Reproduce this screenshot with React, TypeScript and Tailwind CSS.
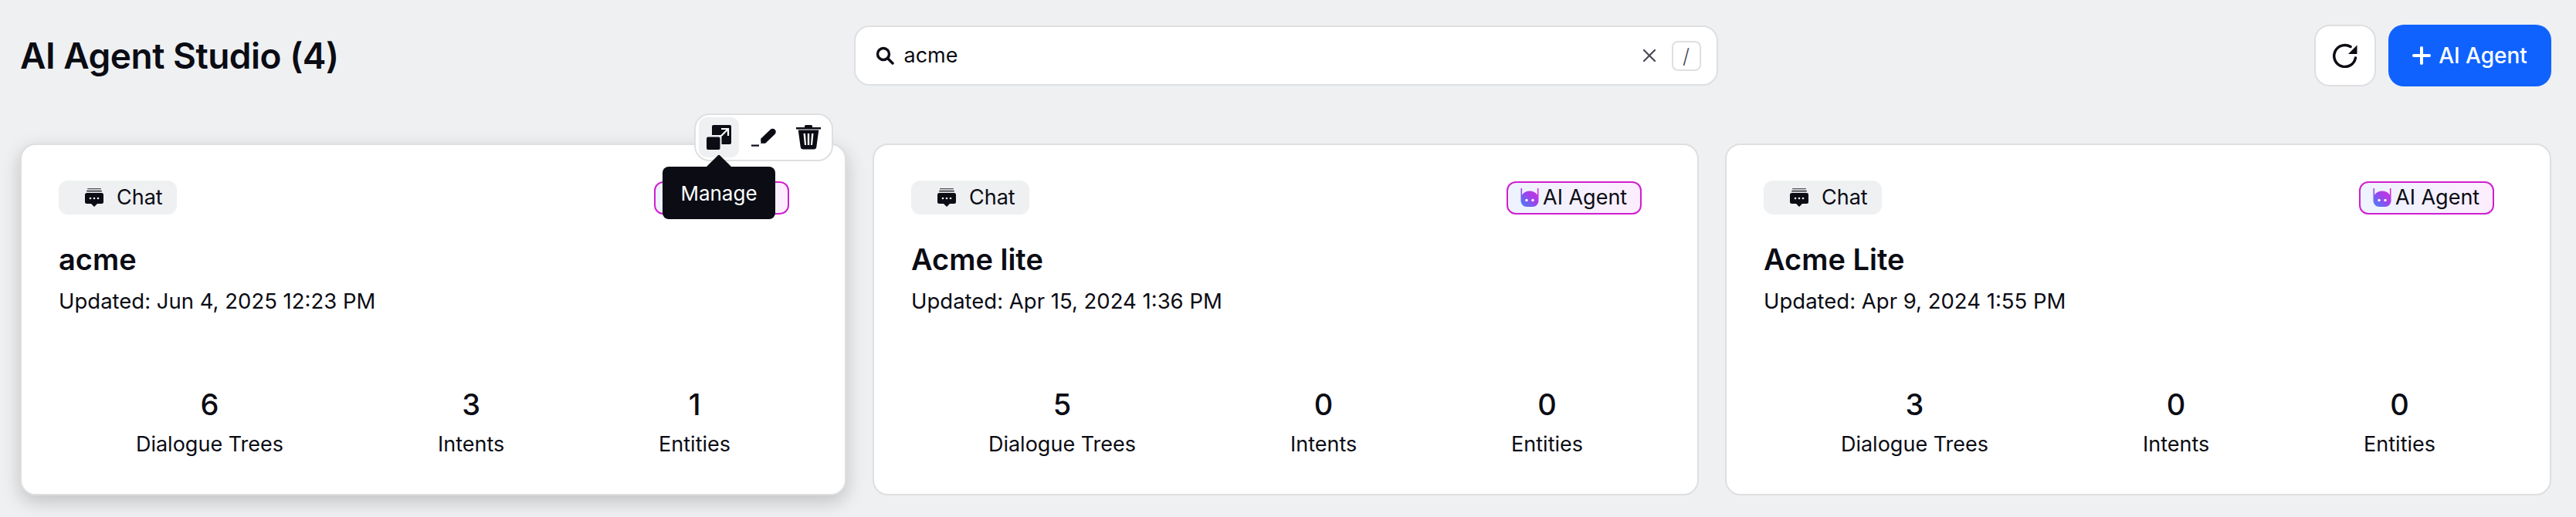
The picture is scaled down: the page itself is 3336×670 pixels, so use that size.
import { X } from 'lucide-react';

const agents = [
  { name: 'acme', updated: 'Jun 4, 2025 12:23 PM', trees: 6, intents: 3, entities: 1, active: true },
  { name: 'Acme lite', updated: 'Apr 15, 2024 1:36 PM', trees: 5, intents: 0, entities: 0, active: false },
  { name: 'Acme Lite', updated: 'Apr 9, 2024 1:55 PM', trees: 3, intents: 0, entities: 0, active: false },
];

const ChatIcon = () => (
  <svg viewBox="0 0 24 24" className="w-[24px] h-[24px]" fill="#0b0c14">
    <rect x="3" y="0" width="18" height="1.2" rx="0.6" opacity="0.7" />
    <rect x="2" y="2.8" width="20" height="1.6" rx="0.8" opacity="0.8" />
    <path d="M2.5 6h19A2.5 2.5 0 0 1 24 8.5v9a2.5 2.5 0 0 1-2.5 2.5H16l-4 4-4-4H2.500A2.500 2.500 0 0 1 0 17.500v-9A2.500 2.500 0 0 1 2.500 6z" />
    <circle cx="7" cy="13" r="1.3" fill="#eef0f2" />
    <circle cx="12" cy="13" r="1.3" fill="#eef0f2" />
    <circle cx="17" cy="13" r="1.3" fill="#eef0f2" />
  </svg>
);

const RobotIcon = ({ id }: { id: string }) => (
  <svg viewBox="0 0 24 24" className="w-[24px] h-[24px]">
    <defs>
      <linearGradient id={id} x1="0" y1="1" x2="1" y2="0">
        <stop offset="0" stopColor="#3f86f8" />
        <stop offset="0.5" stopColor="#9a45ec" />
        <stop offset="1" stopColor="#e626dc" />
      </linearGradient>
    </defs>
    <path
      fill={`url(#${id})`}
      d="M0.500 0h1.600v8.500C4.500 5.200 8 3.500 12 3.500s7.500 1.700 9.900 5V0h1.600v16c0 4.500-3.500 8-8 8h-7c-4.500 0-8-3.500-8-8z"
    />
    <circle cx="8" cy="15.500" r="1.700" fill="#fff" />
    <circle cx="16" cy="15.500" r="1.700" fill="#fff" />
  </svg>
);

const ManageIcon = () => (
  <svg viewBox="0 0 32 32" className="w-[32px] h-[32px]" fill="#0b0c14">
    <path d="M7 2a2 2 0 0 1 2-2h21a2 2 0 0 1 2 2v21a2 2 0 0 1-2 2H19.500V13H7z" />
    <path d="M19 14l9-9M19 5h9v9" fill="none" stroke="#fff" strokeWidth="2.200" />
    <rect x="0" y="15.500" width="17.500" height="16.500" rx="2" />
  </svg>
);

const PenIcon = () => (
  <svg viewBox="0 0 32 32" className="w-[32px] h-[32px]" fill="#0b0c14">
    <rect x="0" y="25.500" width="10" height="2.200" />
    <path d="M16.500 19.500l11-10.500" fill="none" stroke="#0b0c14" strokeWidth="8.500" strokeLinecap="round" />
    <path d="M12.300 24l.5-7.500 7 6.500z" />
  </svg>
);

const TrashIcon = () => (
  <svg viewBox="0 0 32 32" className="w-[32px] h-[32px]" fill="#0b0c14">
    <path fillRule="evenodd" d="M11 1.500A1.500 1.500 0 0 1 12.500 0h7A1.500 1.500 0 0 1 21 1.500V3h11v2.400H0V3h11zM2.700 6.500h26.600l-3 22a3.500 3.500 0 0 1-3.500 3H9.200a3.500 3.500 0 0 1-3.500-3zM9.500 11l1.500 15h2L12 11zm5.300 0v15h2.400V11zm5.200 0l-1 15h2l1.500-15z" />
  </svg>
);

const SearchIcon = () => (
  <svg viewBox="0 0 24 24" className="w-[24px] h-[24px]" fill="none" stroke="#0b0c14" strokeWidth="3.400" strokeLinecap="round">
    <circle cx="10" cy="10" r="7.500" />
    <path d="M16 16l6 6" />
  </svg>
);

const RefreshIcon = () => (
  <svg viewBox="0 0 32 32" className="w-[32px] h-[32px]" fill="none">
    <path d="M29.500 19A14 14 0 1 1 23 4.500" stroke="#0b0c14" strokeWidth="3.500" strokeLinecap="round" />
    <path d="M31.500 2.500v11.500H20z" fill="#0b0c14" />
  </svg>
);

const PlusIcon = () => (
  <svg viewBox="0 0 24 24" className="w-[24px] h-[24px]" fill="none" stroke="#fff" strokeWidth="4" strokeLinecap="round">
    <path d="M12 2v20M2 12h20" />
  </svg>
);

const Stat = ({ value, label }: { value: number; label: string }) => (
  <div className="flex flex-col items-center">
    <div className="text-[38px] leading-[48px] font-medium">{value}</div>
    <div className="text-[27px] leading-[36px] mt-[10px]">{label}</div>
  </div>
);

const AgentCard = ({ agent, index }: { agent: (typeof agents)[number]; index: number }) => (
  <div
    className={`relative h-[456px] bg-white rounded-[20px] border-2 border-[#dedfe1] flex flex-col px-[48px] pt-[46px] ${
      agent.active ? 'shadow-[0_8px_24px_rgba(0,0,0,0.2)]' : ''
    }`}
  >
    <div className="flex items-center justify-between pr-[24px]">
      <div className="flex items-center gap-[17px] h-[44px] w-[153px] pl-[34px] rounded-[12px] bg-[#eef0f2] text-[27px]">
        <ChatIcon />
        <span>Chat</span>
      </div>
      <div className="flex items-center gap-[5px] h-[43px] w-[175px] pl-[16px] rounded-[12px] border-2 border-[#d01fd0] bg-gradient-to-r from-[#edf3ff] to-[#fcedfd] text-[27px]">
        <RobotIcon id={`robot-${index}`} />
        <span>AI Agent</span>
      </div>
    </div>
    <div className="mt-[32px] text-[38px] leading-[52px] font-semibold">{agent.name}</div>
    <div className="mt-[10px] text-[27.500px] leading-[36px]">Updated: {agent.updated}</div>
    <div className="mt-auto mb-[46px] flex justify-around">
      <Stat value={agent.trees} label="Dialogue Trees" />
      <Stat value={agent.intents} label="Intents" />
      <Stat value={agent.entities} label="Entities" />
    </div>
    {agent.active && (
      <>
        <div className="absolute right-[15px] top-[-41px] flex items-center gap-[6px] h-[62px] w-[180px] px-[4px] bg-white border-2 border-[#dedfe1] rounded-[20px]">
          <div className="flex items-center justify-center w-[52px] h-[52px] bg-[#eef0f2] rounded-[10px]">
            <ManageIcon />
          </div>
          <div className="flex items-center justify-center w-[52px] h-[52px]">
            <PenIcon />
          </div>
          <div className="flex items-center justify-center w-[52px] h-[52px]">
            <TrashIcon />
          </div>
        </div>
        <div className="absolute left-[830px] top-[28px] flex items-center justify-center w-[146px] h-[68px] rounded-[8px] bg-[#0b0c14] text-white text-[26px]">
          <div className="absolute top-[-11px] left-[61px] w-[24px] h-[24px] rotate-45 bg-[#0b0c14] rounded-[2px]" />
          <span className="relative">Manage</span>
        </div>
      </>
    )}
  </div>
);

export default function App() {
  return (
    <div className="min-h-screen bg-[#eef0f2] text-[#0b0c14] font-['Inter',sans-serif]">
      <div className="grid grid-cols-[1fr_1119px_1fr] items-center pt-[32px] pl-[26px] pr-[32px]">
        <h1 className="text-[46px] font-semibold tracking-[-0.5px]">AI Agent Studio (4)</h1>
        <div className="flex items-center h-[78px] pl-[26px] pr-[20px] bg-white border-2 border-[#dedfe1] rounded-[20px]">
          <SearchIcon />
          <span className="ml-[13px] text-[27px]">acme</span>
          <X className="ml-auto w-[28px] h-[28px] text-[#4b4d57]" strokeWidth={2} />
          <div className="ml-[15px] flex items-center justify-center w-[38px] h-[39px] border-2 border-[#dedfe1] rounded-[8px] text-[#4b4d57] text-[26px] font-light">
            /
          </div>
        </div>
        <div className="flex justify-end gap-[16px]">
          <div className="flex items-center justify-center w-[80px] h-[80px] bg-white border-2 border-[#dedfe1] rounded-[20px]">
            <RefreshIcon />
          </div>
          <div className="flex items-center justify-center gap-[10px] w-[211px] h-[80px] bg-[#0f62fe] rounded-[20px] text-white text-[28px] font-medium">
            <PlusIcon />
            <span>AI Agent</span>
          </div>
        </div>
      </div>
      <div className="grid grid-cols-3 gap-[34px] mt-[74px] pl-[26px] pr-[32px]">
        {agents.map((a, i) => (
          <AgentCard key={a.name} agent={a} index={i} />
        ))}
      </div>
    </div>
  );
}
